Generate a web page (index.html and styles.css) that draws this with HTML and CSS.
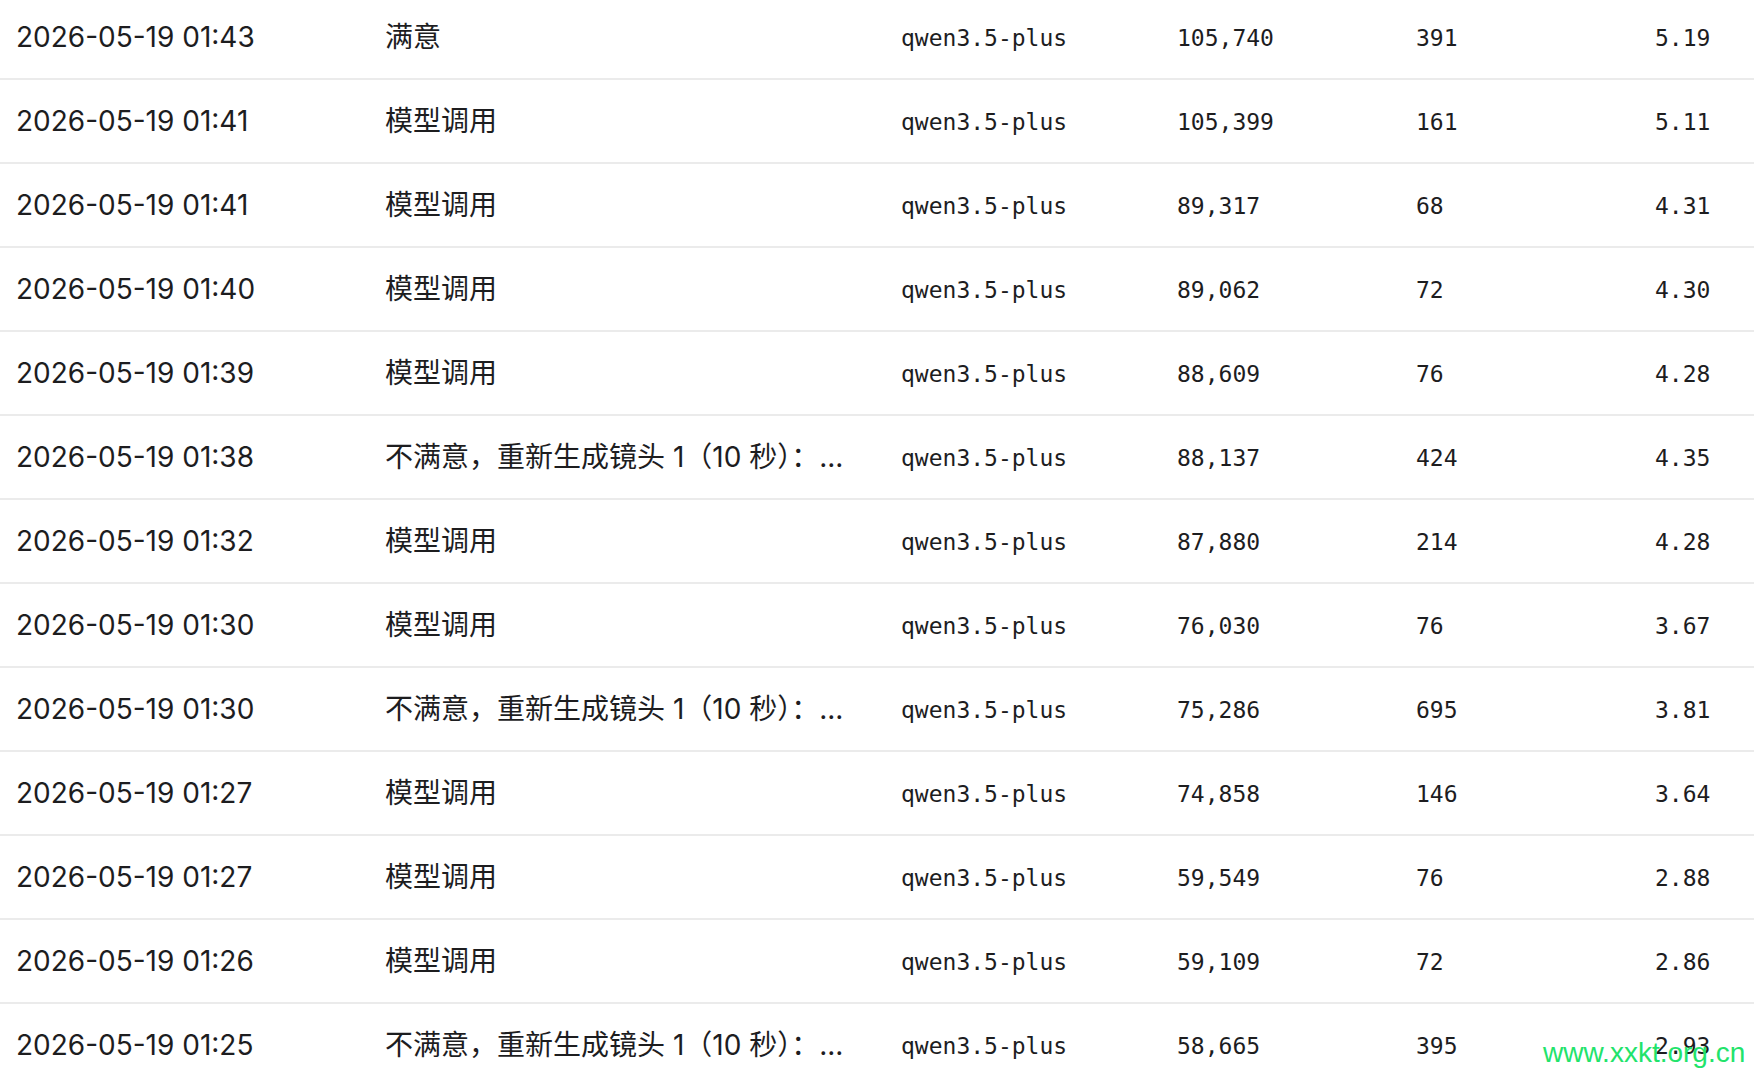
FILE: index.html
```html
<!DOCTYPE html>
<html lang="zh-CN">
<head>
<meta charset="utf-8">
<title>调用记录</title>
<link rel="stylesheet" href="styles.css">
</head>
<body>
<div class="table">
  <div class="row"><div class="c date">2026-05-19 01:43</div><div class="c desc">满意</div><div class="c mono">qwen3.5-plus</div><div class="c mono">105,740</div><div class="c mono">391</div><div class="c mono">5.19</div></div>
  <div class="row"><div class="c date">2026-05-19 01:41</div><div class="c desc">模型调用</div><div class="c mono">qwen3.5-plus</div><div class="c mono">105,399</div><div class="c mono">161</div><div class="c mono">5.11</div></div>
  <div class="row"><div class="c date">2026-05-19 01:41</div><div class="c desc">模型调用</div><div class="c mono">qwen3.5-plus</div><div class="c mono">89,317</div><div class="c mono">68</div><div class="c mono">4.31</div></div>
  <div class="row"><div class="c date">2026-05-19 01:40</div><div class="c desc">模型调用</div><div class="c mono">qwen3.5-plus</div><div class="c mono">89,062</div><div class="c mono">72</div><div class="c mono">4.30</div></div>
  <div class="row"><div class="c date">2026-05-19 01:39</div><div class="c desc">模型调用</div><div class="c mono">qwen3.5-plus</div><div class="c mono">88,609</div><div class="c mono">76</div><div class="c mono">4.28</div></div>
  <div class="row"><div class="c date">2026-05-19 01:38</div><div class="c desc">不满意，重新生成镜头 1（10 秒）：...</div><div class="c mono">qwen3.5-plus</div><div class="c mono">88,137</div><div class="c mono">424</div><div class="c mono">4.35</div></div>
  <div class="row"><div class="c date">2026-05-19 01:32</div><div class="c desc">模型调用</div><div class="c mono">qwen3.5-plus</div><div class="c mono">87,880</div><div class="c mono">214</div><div class="c mono">4.28</div></div>
  <div class="row"><div class="c date">2026-05-19 01:30</div><div class="c desc">模型调用</div><div class="c mono">qwen3.5-plus</div><div class="c mono">76,030</div><div class="c mono">76</div><div class="c mono">3.67</div></div>
  <div class="row"><div class="c date">2026-05-19 01:30</div><div class="c desc">不满意，重新生成镜头 1（10 秒）：...</div><div class="c mono">qwen3.5-plus</div><div class="c mono">75,286</div><div class="c mono">695</div><div class="c mono">3.81</div></div>
  <div class="row"><div class="c date">2026-05-19 01:27</div><div class="c desc">模型调用</div><div class="c mono">qwen3.5-plus</div><div class="c mono">74,858</div><div class="c mono">146</div><div class="c mono">3.64</div></div>
  <div class="row"><div class="c date">2026-05-19 01:27</div><div class="c desc">模型调用</div><div class="c mono">qwen3.5-plus</div><div class="c mono">59,549</div><div class="c mono">76</div><div class="c mono">2.88</div></div>
  <div class="row"><div class="c date">2026-05-19 01:26</div><div class="c desc">模型调用</div><div class="c mono">qwen3.5-plus</div><div class="c mono">59,109</div><div class="c mono">72</div><div class="c mono">2.86</div></div>
  <div class="row"><div class="c date">2026-05-19 01:25</div><div class="c desc">不满意，重新生成镜头 1（10 秒）：...</div><div class="c mono">qwen3.5-plus</div><div class="c mono">58,665</div><div class="c mono">395</div><div class="c mono">2.93</div></div>
</div>
<div class="watermark">www.xxkt.org.cn</div>
</body>
</html>
```
FILE: styles.css
```css
html, body {
  margin: 0;
  padding: 0;
  overflow: hidden;
  background: #ffffff;
}

body {
  color: #1d1d1f;
  font-family: Inter, "Noto Sans CJK SC", sans-serif;
}

.table {
  margin-top: -4px;
}

.row {
  display: grid;
  grid-template-columns: 369px 516px 276px 239px 239px 1fr;
  align-items: center;
  height: 82px;
  padding-left: 16px;
  border-bottom: 2px solid #ebebeb;
}

.c {
  white-space: nowrap;
  line-height: 40px;
}

.date,
.desc {
  font-family: Inter, "Noto Sans CJK SC", sans-serif;
  font-size: 28px;
}

.mono {
  font-family: "DejaVu Sans Mono", "Liberation Mono", monospace;
  font-size: 23px;
  padding-top: 1px;
  color: #1d1d1f;
}

.watermark {
  position: absolute;
  left: 1543px;
  top: 1038px;
  font-family: "Liberation Sans", Arial, sans-serif;
  font-size: 28px;
  line-height: 30px;
  color: #22e36b;
  white-space: nowrap;
}
```
